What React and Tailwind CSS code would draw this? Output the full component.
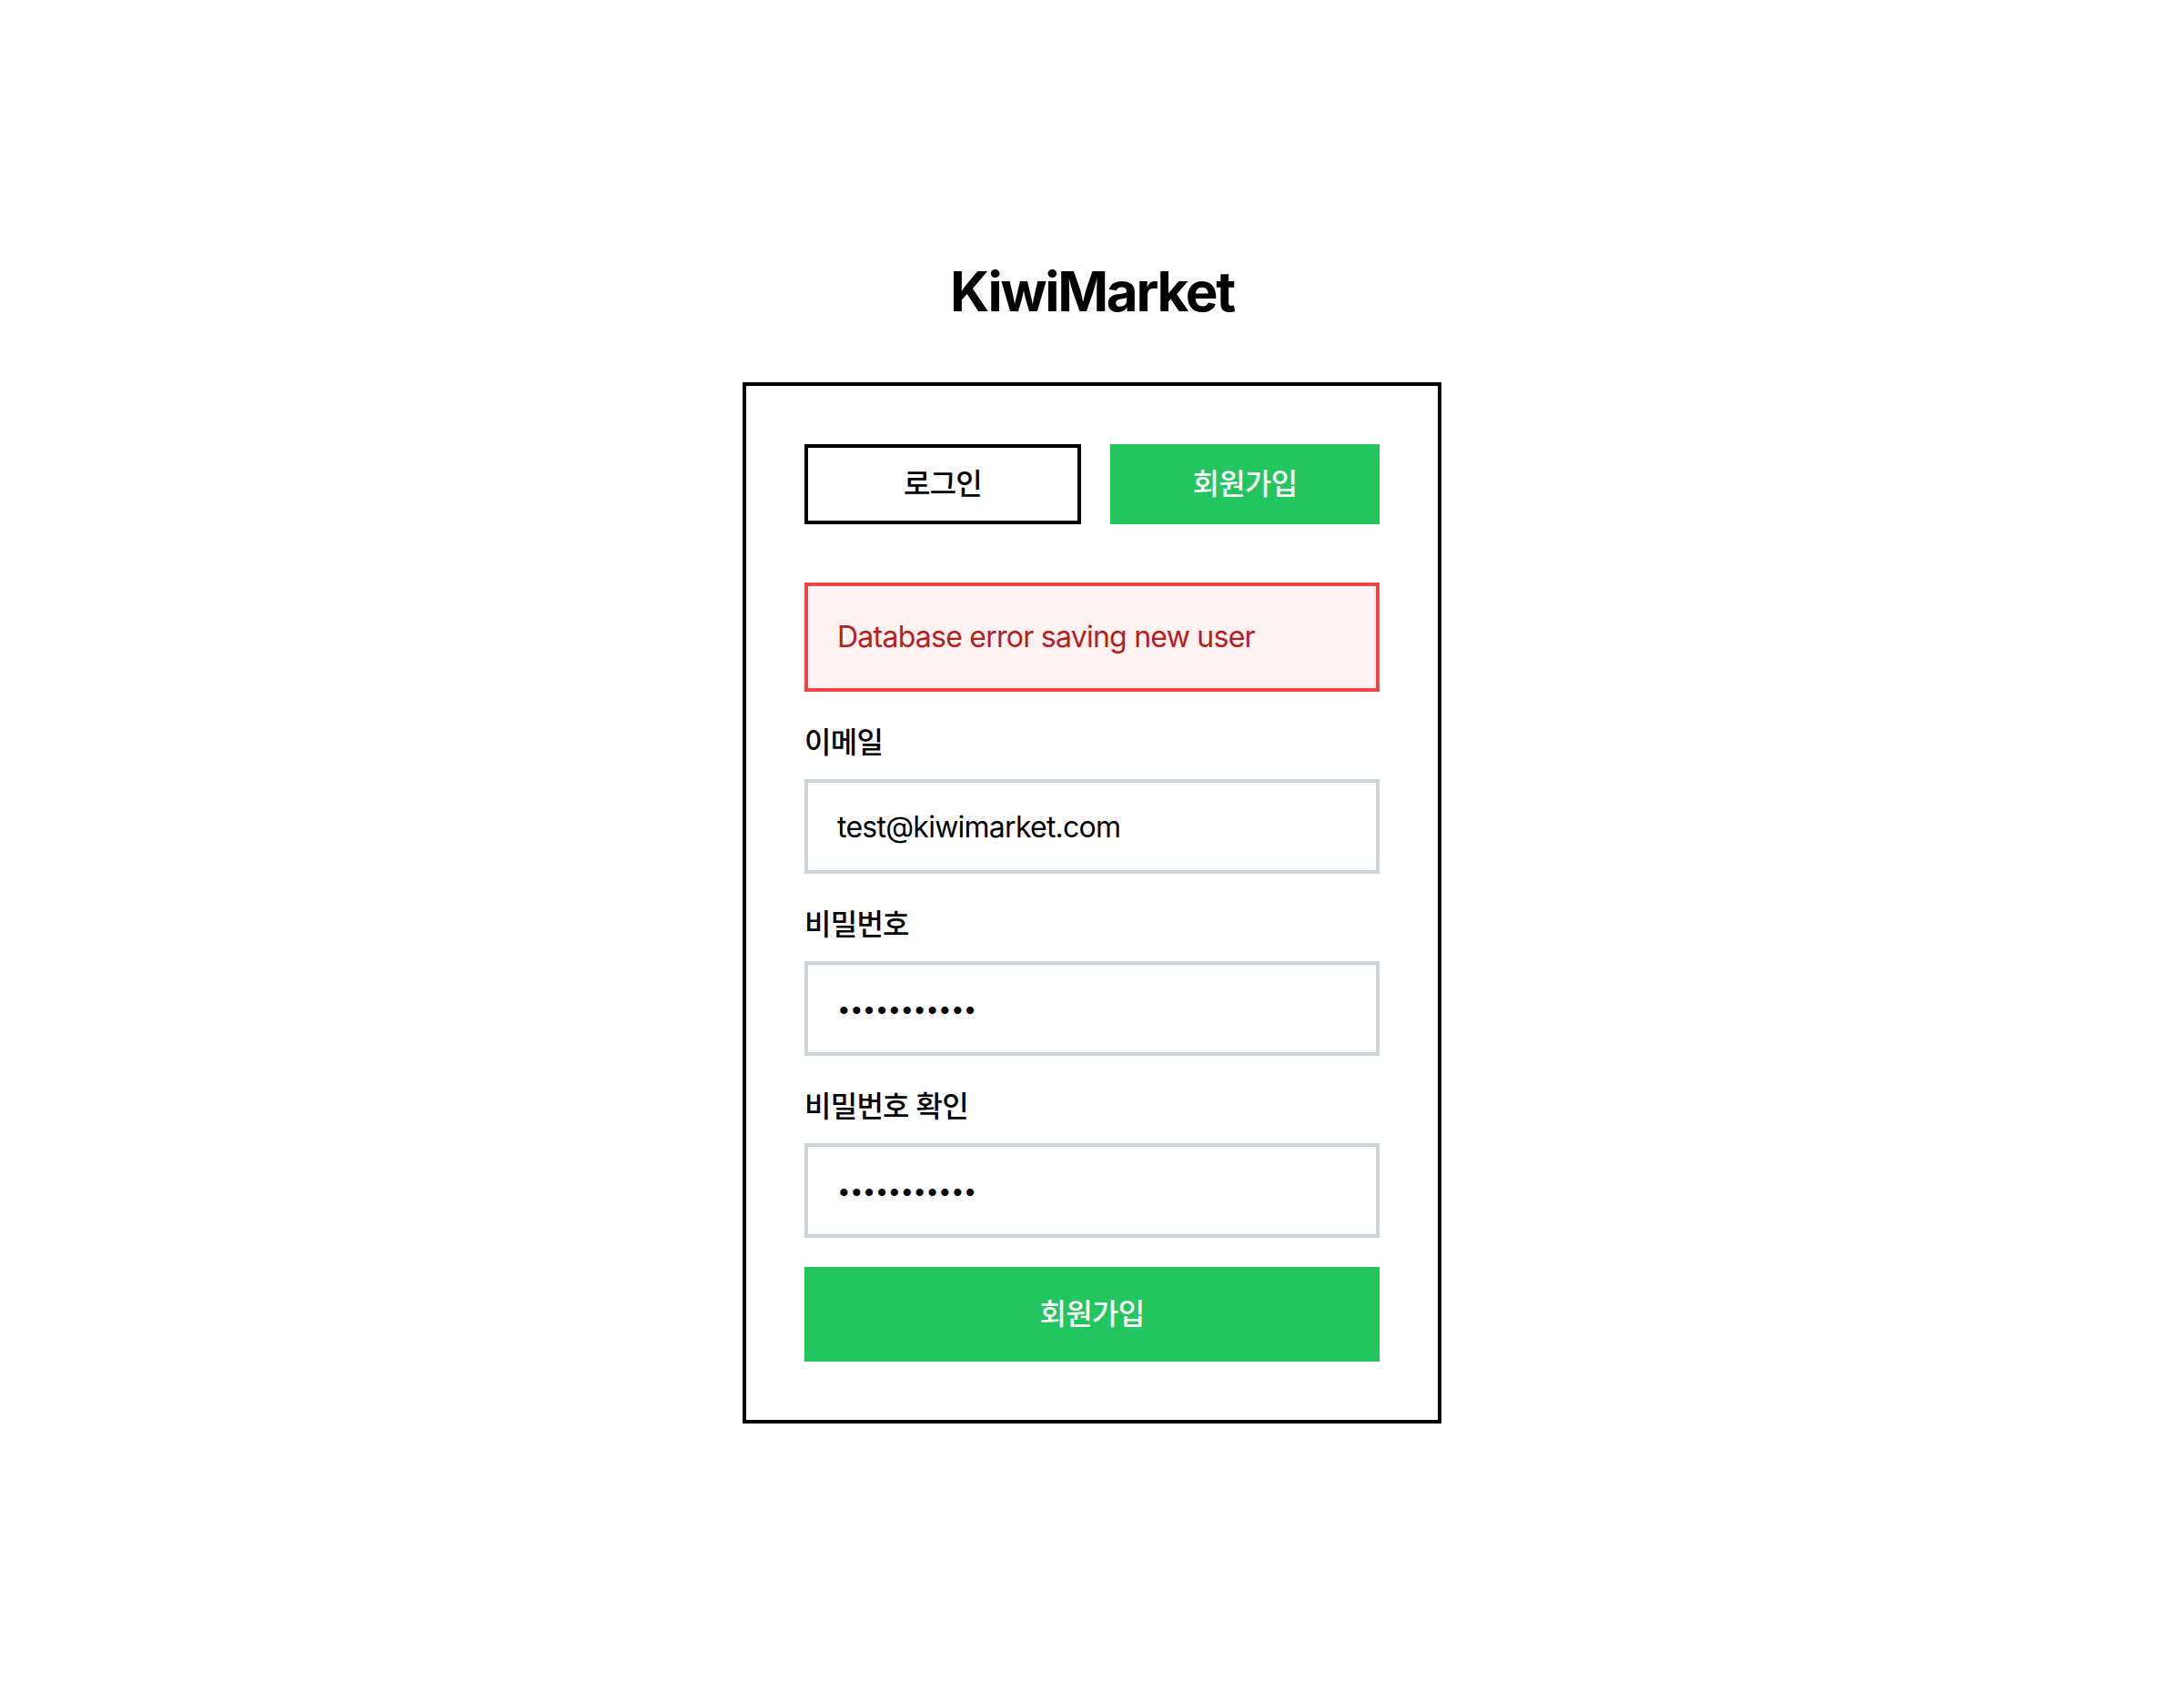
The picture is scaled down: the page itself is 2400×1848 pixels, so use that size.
const App = () => {
    const font = { fontFamily: 'Inter, "Noto Sans CJK KR", sans-serif' };

    return (
        <div className="min-h-screen flex flex-col items-center justify-center bg-white text-black tracking-[-0.75px]" style={font}>
            {/* Logo */}
            <h1 className="text-[60px] leading-[72px] font-bold mb-16 tracking-[-2.25px]">KiwiMarket</h1>

            <div className="w-[768px] border-4 border-black p-16">
                {/* Tabs */}
                <div className="flex gap-8 mb-16">
                    <button className="w-[304px] h-[88px] border-4 border-black bg-white text-[32px] font-medium">
                        로그인
                    </button>
                    <button className="w-[296px] h-[88px] bg-[#22c55e] text-white text-[32px] font-medium">
                        회원가입
                    </button>
                </div>

                {/* Error */}
                <div className="h-[120px] border-4 border-[#ef4444] bg-[#fef2f2] px-8 flex items-center text-[#b91c1c] text-[32px] leading-[48px]">
                    Database error saving new user
                </div>

                <form className="mt-8" onSubmit={(e) => e.preventDefault()}>
                    <div>
                        <label className="block text-[32px] leading-[48px] font-medium mb-4">이메일</label>
                        <input
                            type="email"
                            defaultValue="test@kiwimarket.com"
                            className="w-full h-[104px] border-4 border-[#d1d5db] px-8 text-[32px] tracking-[-0.75px] outline-none"
                            style={font}
                        />
                    </div>
                    <div className="mt-8">
                        <label className="block text-[32px] leading-[48px] font-medium mb-4">비밀번호</label>
                        <input
                            type="password"
                            defaultValue="password123"
                            className="w-full h-[104px] border-4 border-[#d1d5db] px-8 text-[26px] outline-none"
                            style={font}
                        />
                    </div>
                    <div className="mt-8">
                        <label className="block text-[32px] leading-[48px] font-medium mb-4">비밀번호 확인</label>
                        <input
                            type="password"
                            defaultValue="password123"
                            className="w-full h-[104px] border-4 border-[#d1d5db] px-8 text-[26px] outline-none"
                            style={font}
                        />
                    </div>
                    <button type="submit" className="mt-8 w-full h-[104px] bg-[#22c55e] text-white text-[32px] font-medium">
                        회원가입
                    </button>
                </form>
            </div>
        </div>
    );
};

export default App;
